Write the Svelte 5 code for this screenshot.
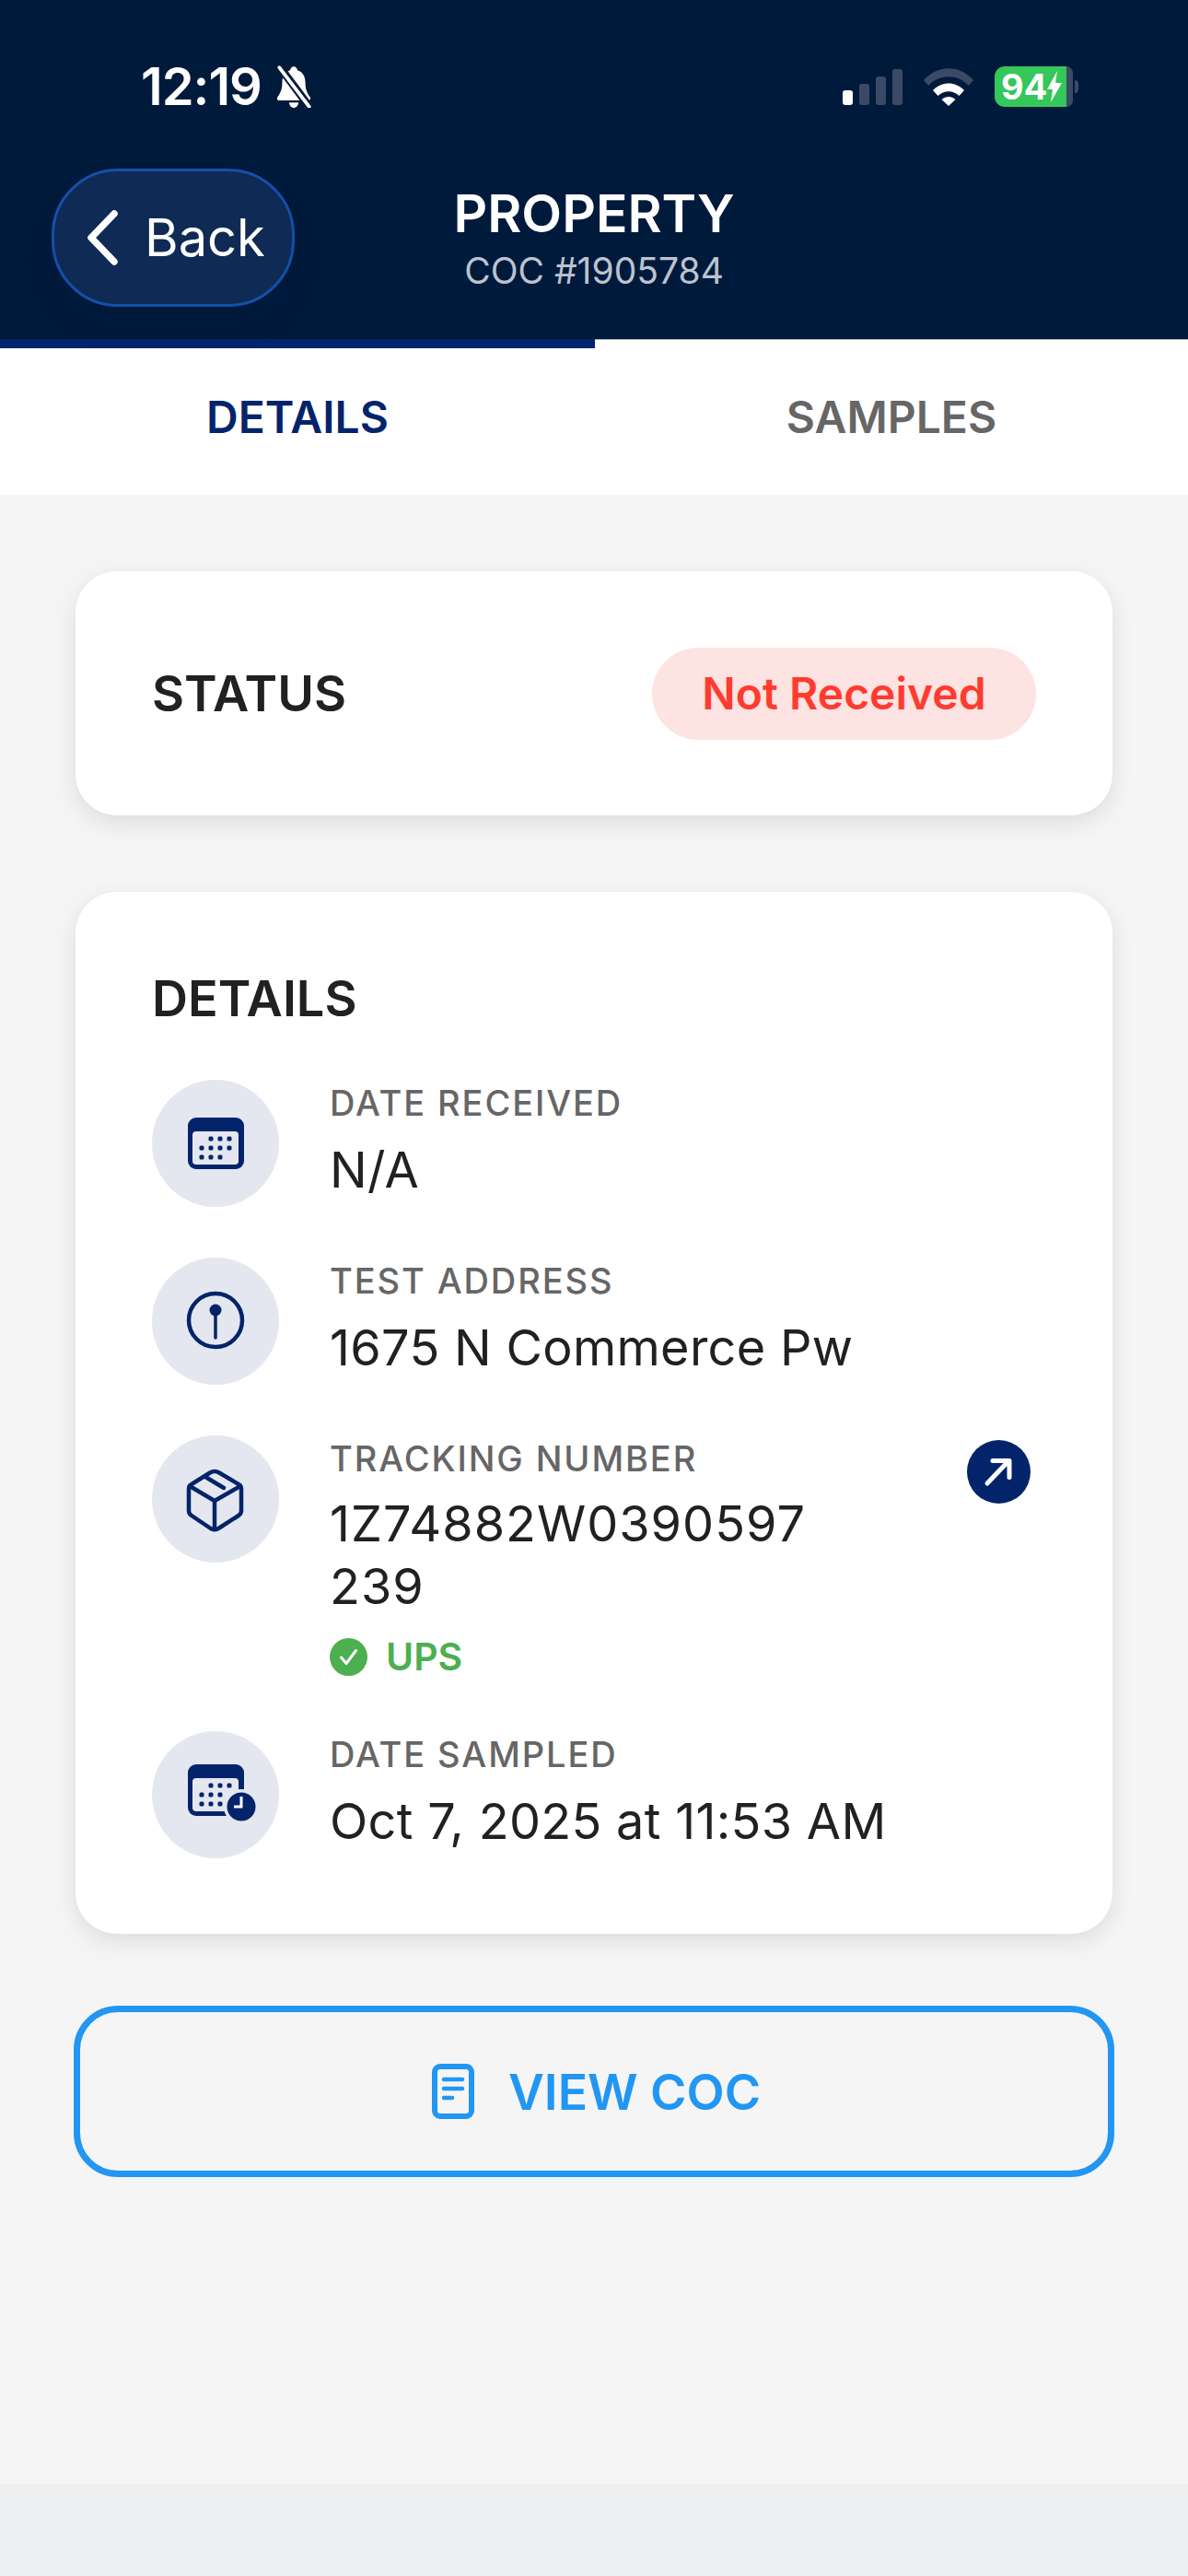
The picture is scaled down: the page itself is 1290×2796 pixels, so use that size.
<script>
	const dotsTop = [
		[64, 64], [74, 64], [84, 64],
		[54, 74], [64, 74], [74, 74], [84, 74],
		[54, 84], [64, 84], [74, 84]
	];
	const clockDots = [
		[64, 59], [74, 59], [84, 59],
		[54, 69], [64, 69], [74, 69],
		[54, 79], [64, 79], [74, 79]
	];
</script>

<div class="screen">
	<header class="header">
		<div class="statusbar">
			<div class="status-left">
				<span class="time">12:19</span>
				<svg class="bell" viewBox="0 0 44 40" width="46" height="46" preserveAspectRatio="none">
					<path d="M22 1c2 0 3.500 1.500 3.800 3.500C31 6 34 10 34 16c0 7 2 10 5 14 1 1.500 0 3-1.500 3h-31C5 33 4 31.500 5 30c3-4 5-7 5-14 0-6 3-10 8.200-11.500C18.500 2.500 20 1 22 1z" fill="#fff" />
					<path d="M17 35h10c-.5 3-2.500 5-5 5s-4.500-2-5-5z" fill="#fff" />
					<path d="M7 1l32 39" stroke="#001a3c" stroke-width="8" />
					<path d="M7 2l31 37" stroke="#fff" stroke-width="3.500" stroke-linecap="round" />
				</svg>
			</div>
			<div class="status-right">
				<div class="signal">
					<span class="bar on" style="height: 16px"></span>
					<span class="bar" style="height: 23px"></span>
					<span class="bar" style="height: 31px"></span>
					<span class="bar" style="height: 39px"></span>
				</div>
				<svg class="wifi" viewBox="0 0 56 42" width="56" height="42">
					<path d="M1 14C16 -3 40 -3 55 14l-5 6C38 7 18 7 6 20z" fill="#3a4a66" />
					<path d="M11 25c9.500-10 24.500-10 34 0l-5.500 6c-6.500-6.500-16.500-6.500-23 0z" fill="#fff" />
					<path d="M20.500 35c4.500-4 10.500-4 15 0L28 42z" fill="#fff" />
				</svg>
				<div class="battery">
					<span class="battery-fill">94<svg viewBox="0 0 16 34" width="16" height="34"><path d="M11 0L0 20h6L4 34l12-21H9z" fill="#fff" /></svg></span>
					<span class="battery-rest"></span>
					<span class="battery-nub"></span>
				</div>
			</div>
		</div>
		<div class="nav">
			<div class="nav-left">
				<div class="back">
					<svg viewBox="0 0 36 60" width="36" height="60">
						<path d="M31 4L6 30l25 26" fill="none" stroke="#fff" stroke-width="7.500" stroke-linecap="round" stroke-linejoin="round" />
					</svg>
					<span>Back</span>
				</div>
			</div>
			<div class="nav-title">
				<div class="title">PROPERTY</div>
				<div class="subtitle">COC #1905784</div>
			</div>
			<div></div>
		</div>
	</header>

	<div class="tabs">
		<div class="tab active">DETAILS</div>
		<div class="tab">SAMPLES</div>
	</div>

	<main class="content">
		<section class="card status-card">
			<h2>STATUS</h2>
			<span class="pill">Not Received</span>
		</section>

		<section class="card details-card">
			<h2>DETAILS</h2>
			<div class="items">
				<div class="item">
					<svg class="badge" viewBox="0 0 138 138" width="138" height="138">
						<circle cx="69" cy="69" r="69" fill="#e4e7ef" />
						<rect x="39" y="41" width="61" height="56" rx="9" fill="#03246a" />
						<rect x="44" y="56" width="50" height="36" rx="4" fill="#e4e7ef" />
						{#each dotsTop as d}
							<rect x={d[0] - 2.5} y={d[1] - 2.5} width="5" height="5" rx="1.500" fill="#03246a" />
						{/each}
					</svg>
					<div class="text">
						<div class="label">DATE RECEIVED</div>
						<div class="value">N/A</div>
					</div>
				</div>

				<div class="item">
					<svg class="badge" viewBox="0 0 138 138" width="138" height="138">
						<circle cx="69" cy="69" r="69" fill="#e4e7ef" />
						<circle cx="69" cy="68" r="29" fill="none" stroke="#03246a" stroke-width="4.500" />
						<circle cx="69" cy="57" r="6.500" fill="#03246a" />
						<path d="M69 60v27" stroke="#03246a" stroke-width="3.500" stroke-linecap="round" />
					</svg>
					<div class="text">
						<div class="label">TEST ADDRESS</div>
						<div class="value">1675 N Commerce Pw</div>
					</div>
				</div>

				<div class="item">
					<svg class="badge" viewBox="0 0 138 138" width="138" height="138">
						<circle cx="69" cy="69" r="69" fill="#e4e7ef" />
						<g fill="none" stroke="#03246a" stroke-width="4.500" stroke-linejoin="round" stroke-linecap="round">
							<path d="M63 40.500a10 10 0 0 1 10 0l21 12.500a6 6 0 0 1 3 5v24a6 6 0 0 1-3 5l-21 13.500a8 8 0 0 1-10 0L43 87a6 6 0 0 1-3-5V58a6 6 0 0 1 3-5z" />
							<path d="M41 55l27 16 28-16" />
							<path d="M68 71v31" />
							<path d="M58 45l20 12" />
						</g>
					</svg>
					<div class="text tracking-text">
						<div class="label">TRACKING NUMBER</div>
						<div class="value tracking">1Z74882W0390597239</div>
						<div class="carrier">
							<svg viewBox="0 0 41 41" width="41" height="41">
								<circle cx="20.500" cy="20.500" r="20.500" fill="#4caf50" />
								<path d="M12.500 21l5.500 6.500 10.500-14" fill="none" stroke="#fff" stroke-width="3" stroke-linecap="round" stroke-linejoin="round" />
							</svg>
							<span>UPS</span>
						</div>
					</div>
					<div class="link">
						<svg viewBox="0 0 69 69" width="69" height="69">
							<circle cx="34.500" cy="34.500" r="34.500" fill="#03246a" />
							<path d="M22 47l23-24M28 22.500h18v18" fill="none" stroke="#fff" stroke-width="5" stroke-linecap="round" stroke-linejoin="round" />
						</svg>
					</div>
				</div>

				<div class="item">
					<svg class="badge" viewBox="0 0 138 138" width="138" height="138">
						<circle cx="69" cy="69" r="69" fill="#e4e7ef" />
						<rect x="39" y="36" width="61" height="56" rx="9" fill="#03246a" />
						<rect x="44" y="51" width="50" height="36" rx="4" fill="#e4e7ef" />
						{#each clockDots as d}
							<rect x={d[0] - 2.5} y={d[1] - 2.5} width="5" height="5" rx="1.500" fill="#03246a" />
						{/each}
						<circle cx="97" cy="82" r="19" fill="#e4e7ef" />
						<circle cx="97" cy="82" r="15.500" fill="#03246a" />
						<path d="M97 71v11h-8" fill="none" stroke="#fff" stroke-width="3" />
					</svg>
					<div class="text">
						<div class="label">DATE SAMPLED</div>
						<div class="value">Oct 7, 2025 at 11:53 AM</div>
					</div>
				</div>
			</div>
		</section>

		<div class="view-coc">
			<svg viewBox="0 0 46 60" width="46" height="60">
				<rect x="3" y="3" width="40" height="54" rx="6" fill="none" stroke="#2196f3" stroke-width="6" />
				<path d="M13 17h20M13 27h20M13 37h9" stroke="#2196f3" stroke-width="4.500" stroke-linecap="round" />
			</svg>
			<span>VIEW COC</span>
		</div>
	</main>

	<div class="footer"></div>
</div>

<style>
	:global(body) {
		margin: 0;
		background: #f5f5f5;
	}

	.screen {
		width: 1290px;
		height: 2796px;
		display: flex;
		flex-direction: column;
		font-family: Inter, "Liberation Sans", sans-serif;
		color: #212121;
		overflow: hidden;
	}

	.header {
		background: #001a3c;
		height: 368px;
		box-sizing: border-box;
		padding-top: 72px;
		color: #fff;
	}

	.statusbar {
		height: 44px;
		display: flex;
		justify-content: space-between;
		align-items: center;
		padding: 0 119px 0 153px;
	}

	.status-left {
		display: flex;
		align-items: center;
		gap: 12px;
	}

	.time {
		font-size: 56px;
		font-weight: 600;
		letter-spacing: -1px;
	}

	.status-right {
		display: flex;
		align-items: center;
		gap: 22px;
	}

	.signal {
		display: flex;
		align-items: flex-end;
		gap: 7px;
		height: 39px;
	}

	.bar {
		width: 11px;
		border-radius: 3px;
		background: #3a4a66;
	}

	.bar.on {
		background: #fff;
	}

	.battery {
		display: flex;
		align-items: center;
		height: 44px;
	}

	.battery-fill {
		width: 78px;
		height: 44px;
		box-sizing: border-box;
		padding-left: 7px;
		background: #34c759;
		border-radius: 11px 0 0 11px;
		display: flex;
		align-items: center;
		font-size: 38px;
		font-weight: 700;
		line-height: 1;
		color: #fff;
	}

	.battery-rest {
		width: 7px;
		height: 44px;
		background: #3a4a66;
		border-radius: 0 9px 9px 0;
	}

	.battery-nub {
		width: 4px;
		height: 14px;
		margin-left: 2px;
		background: #3a4a66;
		border-radius: 0 4px 4px 0;
	}

	.nav {
		margin-top: 67px;
		display: grid;
		grid-template-columns: 1fr auto 1fr;
		align-items: center;
		position: relative;
		z-index: 1;
	}

	.nav-left {
		padding-left: 56px;
	}

	.back {
		width: 264px;
		height: 150px;
		box-sizing: border-box;
		display: flex;
		align-items: center;
		gap: 28px;
		padding-left: 34px;
		background: #0e2a55;
		border: 3px solid #1450a8;
		border-radius: 72px;
		box-shadow: 0 24px 50px rgba(0, 20, 60, 0.03);
		font-size: 56px;
	}

	.nav-title {
		text-align: center;
	}

	.title {
		font-size: 57px;
		font-weight: 600;
		line-height: 64px;
	}

	.subtitle {
		font-size: 39px;
		line-height: 46px;
		margin-top: 7px;
		color: #bcc3cf;
	}

	.tabs {
		height: 169px;
		display: grid;
		grid-template-columns: 646px 1fr;
		background: #fff;
	}

	.tab {
		display: flex;
		align-items: center;
		justify-content: center;
		box-sizing: border-box;
		padding-bottom: 2px;
		border-top: 1px solid #aab0ba;
		font-size: 48px;
		font-weight: 600;
		color: #666;
	}

	.tab.active {
		border-top: 10px solid #03246a;
		padding-bottom: 11px;
		color: #03246a;
	}

	.content {
		flex: 1;
		padding: 83px 82px 0;
		display: flex;
		flex-direction: column;
	}

	.card {
		background: #fff;
		border-radius: 45px;
		box-shadow: 0 8px 26px rgba(0, 0, 0, 0.1);
	}

	h2 {
		margin: 0;
		font-size: 54px;
		font-weight: 600;
		line-height: 64px;
	}

	.status-card {
		height: 265px;
		box-sizing: border-box;
		padding: 0 83px;
		display: flex;
		align-items: center;
		justify-content: space-between;
	}

	.pill {
		width: 417px;
		height: 100px;
		display: flex;
		align-items: center;
		justify-content: center;
		border-radius: 50px;
		background: #fde3e1;
		color: #ff3b30;
		font-size: 48px;
		font-weight: 600;
	}

	.details-card {
		margin-top: 83px;
		padding: 84px 83px 82px;
	}

	.items {
		margin-top: 56px;
		display: flex;
		flex-direction: column;
		gap: 55px;
	}

	.item {
		display: flex;
		align-items: flex-start;
		gap: 55px;
		min-height: 138px;
	}

	.badge {
		flex: none;
	}

	.text {
		flex: 1;
		padding-top: 2px;
		min-width: 0;
	}

	.tracking-text {
		padding-bottom: 5px;
	}

	.label {
		font-size: 38px;
		line-height: 46px;
		font-weight: 500;
		letter-spacing: 1.900px;
		color: #666;
	}

	.value {
		margin-top: 15px;
		font-size: 54px;
		line-height: 69px;
		letter-spacing: 0.3px;
		color: #212121;
	}

	.tracking {
		margin-top: 14px;
		line-height: 68px;
		letter-spacing: 1px;
		max-width: 550px;
		word-break: break-all;
	}

	.carrier {
		margin-top: 21px;
		height: 42px;
		display: flex;
		align-items: center;
		gap: 20px;
		font-size: 41px;
		font-weight: 600;
		color: #4caf50;
	}

	.link {
		flex: none;
		margin: 5px 6px 0 0;
	}

	.link svg,
	.carrier svg {
		display: block;
	}

	.view-coc {
		margin: 78px -2px 0;
		height: 186px;
		box-sizing: border-box;
		padding-left: 5px;
		border: 7px solid #2196f3;
		border-radius: 48px;
		display: flex;
		align-items: center;
		justify-content: center;
		gap: 37px;
		font-size: 53.5px;
		font-weight: 600;
		color: #2196f3;
	}

	.footer {
		height: 100px;
		background: #eeeff1;
	}
</style>
